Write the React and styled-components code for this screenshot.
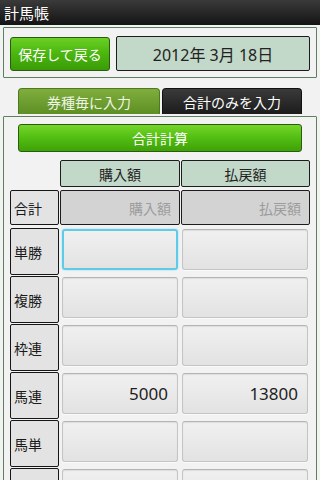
import React from "react";
import styled, { createGlobalStyle } from "styled-components";

const Global = createGlobalStyle`
  html, body { margin: 0; padding: 0; background: #f2f2f2; }
  body { width: 320px; height: 480px; overflow: hidden;
    font-family: "Noto Sans", "Noto Sans CJK JP", sans-serif; }
  * { box-sizing: border-box; }
`;

const TitleBar = styled.div`
  height: 25px;
  background: linear-gradient(#3a3a3a, #141414);
  color: #fff;
  font-size: 15px;
  line-height: 25px;
  padding-left: 4px;
  font-family: "Noto Sans CJK JP", sans-serif;
`;

const Content = styled.div`
  padding: 2px 3px 0 3px;
`;

const Panel = styled.div`
  border: 1px solid #5d7f5d;
  background: #f2f2f2;
  border-radius: 1px;
`;

const TopPanel = styled(Panel)`
  height: 51px;
  display: flex;
  align-items: center;
  padding: 2px 6px 0 6px;
  gap: 6px;
`;

const GreenButton = styled.div`
  display: flex;
  align-items: center;
  justify-content: center;
  color: #fff;
  font-family: "Noto Sans CJK JP", sans-serif;
  border: 1px solid #2c5a12;
  border-radius: 3px;
  background: linear-gradient(#6ccf24 0%, #4cb810 45%, #3a9c06 100%);
`;

const SaveButton = styled(GreenButton)`
  width: 100px;
  height: 34px;
  font-size: 14px;
`;

const DateBox = styled.div`
  flex: 1;
  height: 35px;
  display: flex;
  align-items: center;
  justify-content: center;
  background: #c2d8c8;
  border: 1.5px solid #1c1c1c;
  border-radius: 2px;
  font-size: 16px;
  color: #222;
  font-family: "Noto Sans", "Noto Sans CJK JP", sans-serif;
`;

const Tabs = styled.div`
  display: flex;
  gap: 2px;
  margin: 10px 0 0 15px;
`;

const Tab = styled.div`
  width: ${p => p.$w}px;
  height: 26px;
  display: flex;
  align-items: center;
  justify-content: center;
  border-radius: 4px 4px 0 0;
  font-size: 14px;
  font-family: "Noto Sans CJK JP", sans-serif;
  color: ${p => (p.$active ? "#eef5e4" : "#ffffff")};
  background: ${p =>
    p.$active
      ? "linear-gradient(#7fae3e, #5e8f24)"
      : "linear-gradient(#3a3a3a, #1c1c1c)"};
  border: 1px solid ${p => (p.$active ? "#4d7a1c" : "#111")};
  border-bottom: none;
`;

const MainPanel = styled(Panel)`
  margin-top: 2px;
  padding: 7px 7px 0 6px;
  height: 400px;
`;

const CalcButton = styled(GreenButton)`
  height: 28px;
  margin: 0 7px 0 8px;
  font-size: 14px;
  background: linear-gradient(#74d628 0%, #52bd12 50%, #3ea208 100%);
`;

const Grid = styled.div`
  display: grid;
  grid-template-columns: 49px 120px 129px;
  column-gap: 1px;
  margin-top: 8px;
`;

const HeaderCell = styled.div`
  grid-column: ${p => p.$col};
  height: 27px;
  display: flex;
  align-items: center;
  justify-content: center;
  background: #c2d8c8;
  border: 1.5px solid #1c1c1c;
  border-radius: 2px;
  font-size: 14px;
  color: #222;
  font-family: "Noto Sans CJK JP", sans-serif;
`;

const Row = styled.div`
  display: contents;
`;

const Label = styled.div`
  height: ${p => p.$h}px;
  margin-top: ${p => p.$mt}px;
  display: flex;
  align-items: center;
  padding-left: 3px;
  background: #e3e3e3;
  border: 1px solid #161616;
  border-bottom-width: 1.5px;
  border-radius: 2px;
  font-size: 14px;
  color: #1a1a1a;
  font-family: "Noto Sans CJK JP", sans-serif;
`;

const SumCell = styled.div`
  height: 35px;
  margin-top: 3px;
  display: flex;
  align-items: center;
  justify-content: flex-end;
  padding-right: 8px;
  background: #d3d3d3;
  border: 1.5px solid #1c1c1c;
  border-radius: 2px;
  font-size: 14px;
  color: #9c9c9c;
  font-family: "Noto Sans CJK JP", sans-serif;
`;

const FieldWrap = styled.div`
  margin-top: ${p => p.$mt}px;
  height: 47px;
  padding: 1px ${p => p.$pr}px 5px ${p => p.$pl}px;
`;

const Field = styled.div`
  height: 100%;
  display: flex;
  align-items: center;
  justify-content: flex-end;
  padding-right: 9px;
  border-radius: 3px;
  font-size: 17px;
  color: #1e1e1e;
  font-family: "Noto Sans", sans-serif;
  background: linear-gradient(#f0f0f0 0%, #ebebeb 40%, #e2e2e2 100%);
  border: ${p => (p.$focus ? "2px solid #5fcbe9" : "1px solid #c4c4c4")};
  border-top-color: ${p => (p.$focus ? "#5fcbe9" : "#b4b4b4")};
  box-shadow: ${p =>
    p.$focus
      ? "0 0 2px #8fdcf0"
      : "inset 0 1px 1px rgba(0,0,0,0.08), 0 1px 0 #fafafa"};
`;

const rows = [
  { name: "単勝", buy: "", pay: "", focus: true },
  { name: "複勝", buy: "", pay: "" },
  { name: "枠連", buy: "", pay: "" },
  { name: "馬連", buy: "5000", pay: "13800" },
  { name: "馬単", buy: "", pay: "" },
  { name: "", buy: "", pay: "" },
];

export default function App() {
  return (
    <>
      <Global />
      <TitleBar>計馬帳</TitleBar>
      <Content>
        <TopPanel>
          <SaveButton>保存して戻る</SaveButton>
          <DateBox>2012年 3月 18日</DateBox>
        </TopPanel>
        <Tabs>
          <Tab $active $w={142}>券種毎に入力</Tab>
          <Tab $w={140}>合計のみを入力</Tab>
        </Tabs>
        <MainPanel>
          <CalcButton>合計計算</CalcButton>
          <Grid>
            <HeaderCell $col={2}>購入額</HeaderCell>
            <HeaderCell $col={3}>払戻額</HeaderCell>
            <Row>
              <Label $h={35} $mt={3}>合計</Label>
              <SumCell>購入額</SumCell>
              <SumCell>払戻額</SumCell>
            </Row>
            {rows.map((r, i) => (
              <Row key={i}>
                <Label $h={47} $mt={i === 0 ? 3 : 1}>{r.name}</Label>
                <FieldWrap $mt={i === 0 ? 3 : 1} $pl={2} $pr={2}>
                  <Field $focus={r.focus}>{r.buy}</Field>
                </FieldWrap>
                <FieldWrap $mt={i === 0 ? 3 : 1} $pl={1} $pr={2}>
                  <Field>{r.pay}</Field>
                </FieldWrap>
              </Row>
            ))}
          </Grid>
        </MainPanel>
      </Content>
    </>
  );
}
